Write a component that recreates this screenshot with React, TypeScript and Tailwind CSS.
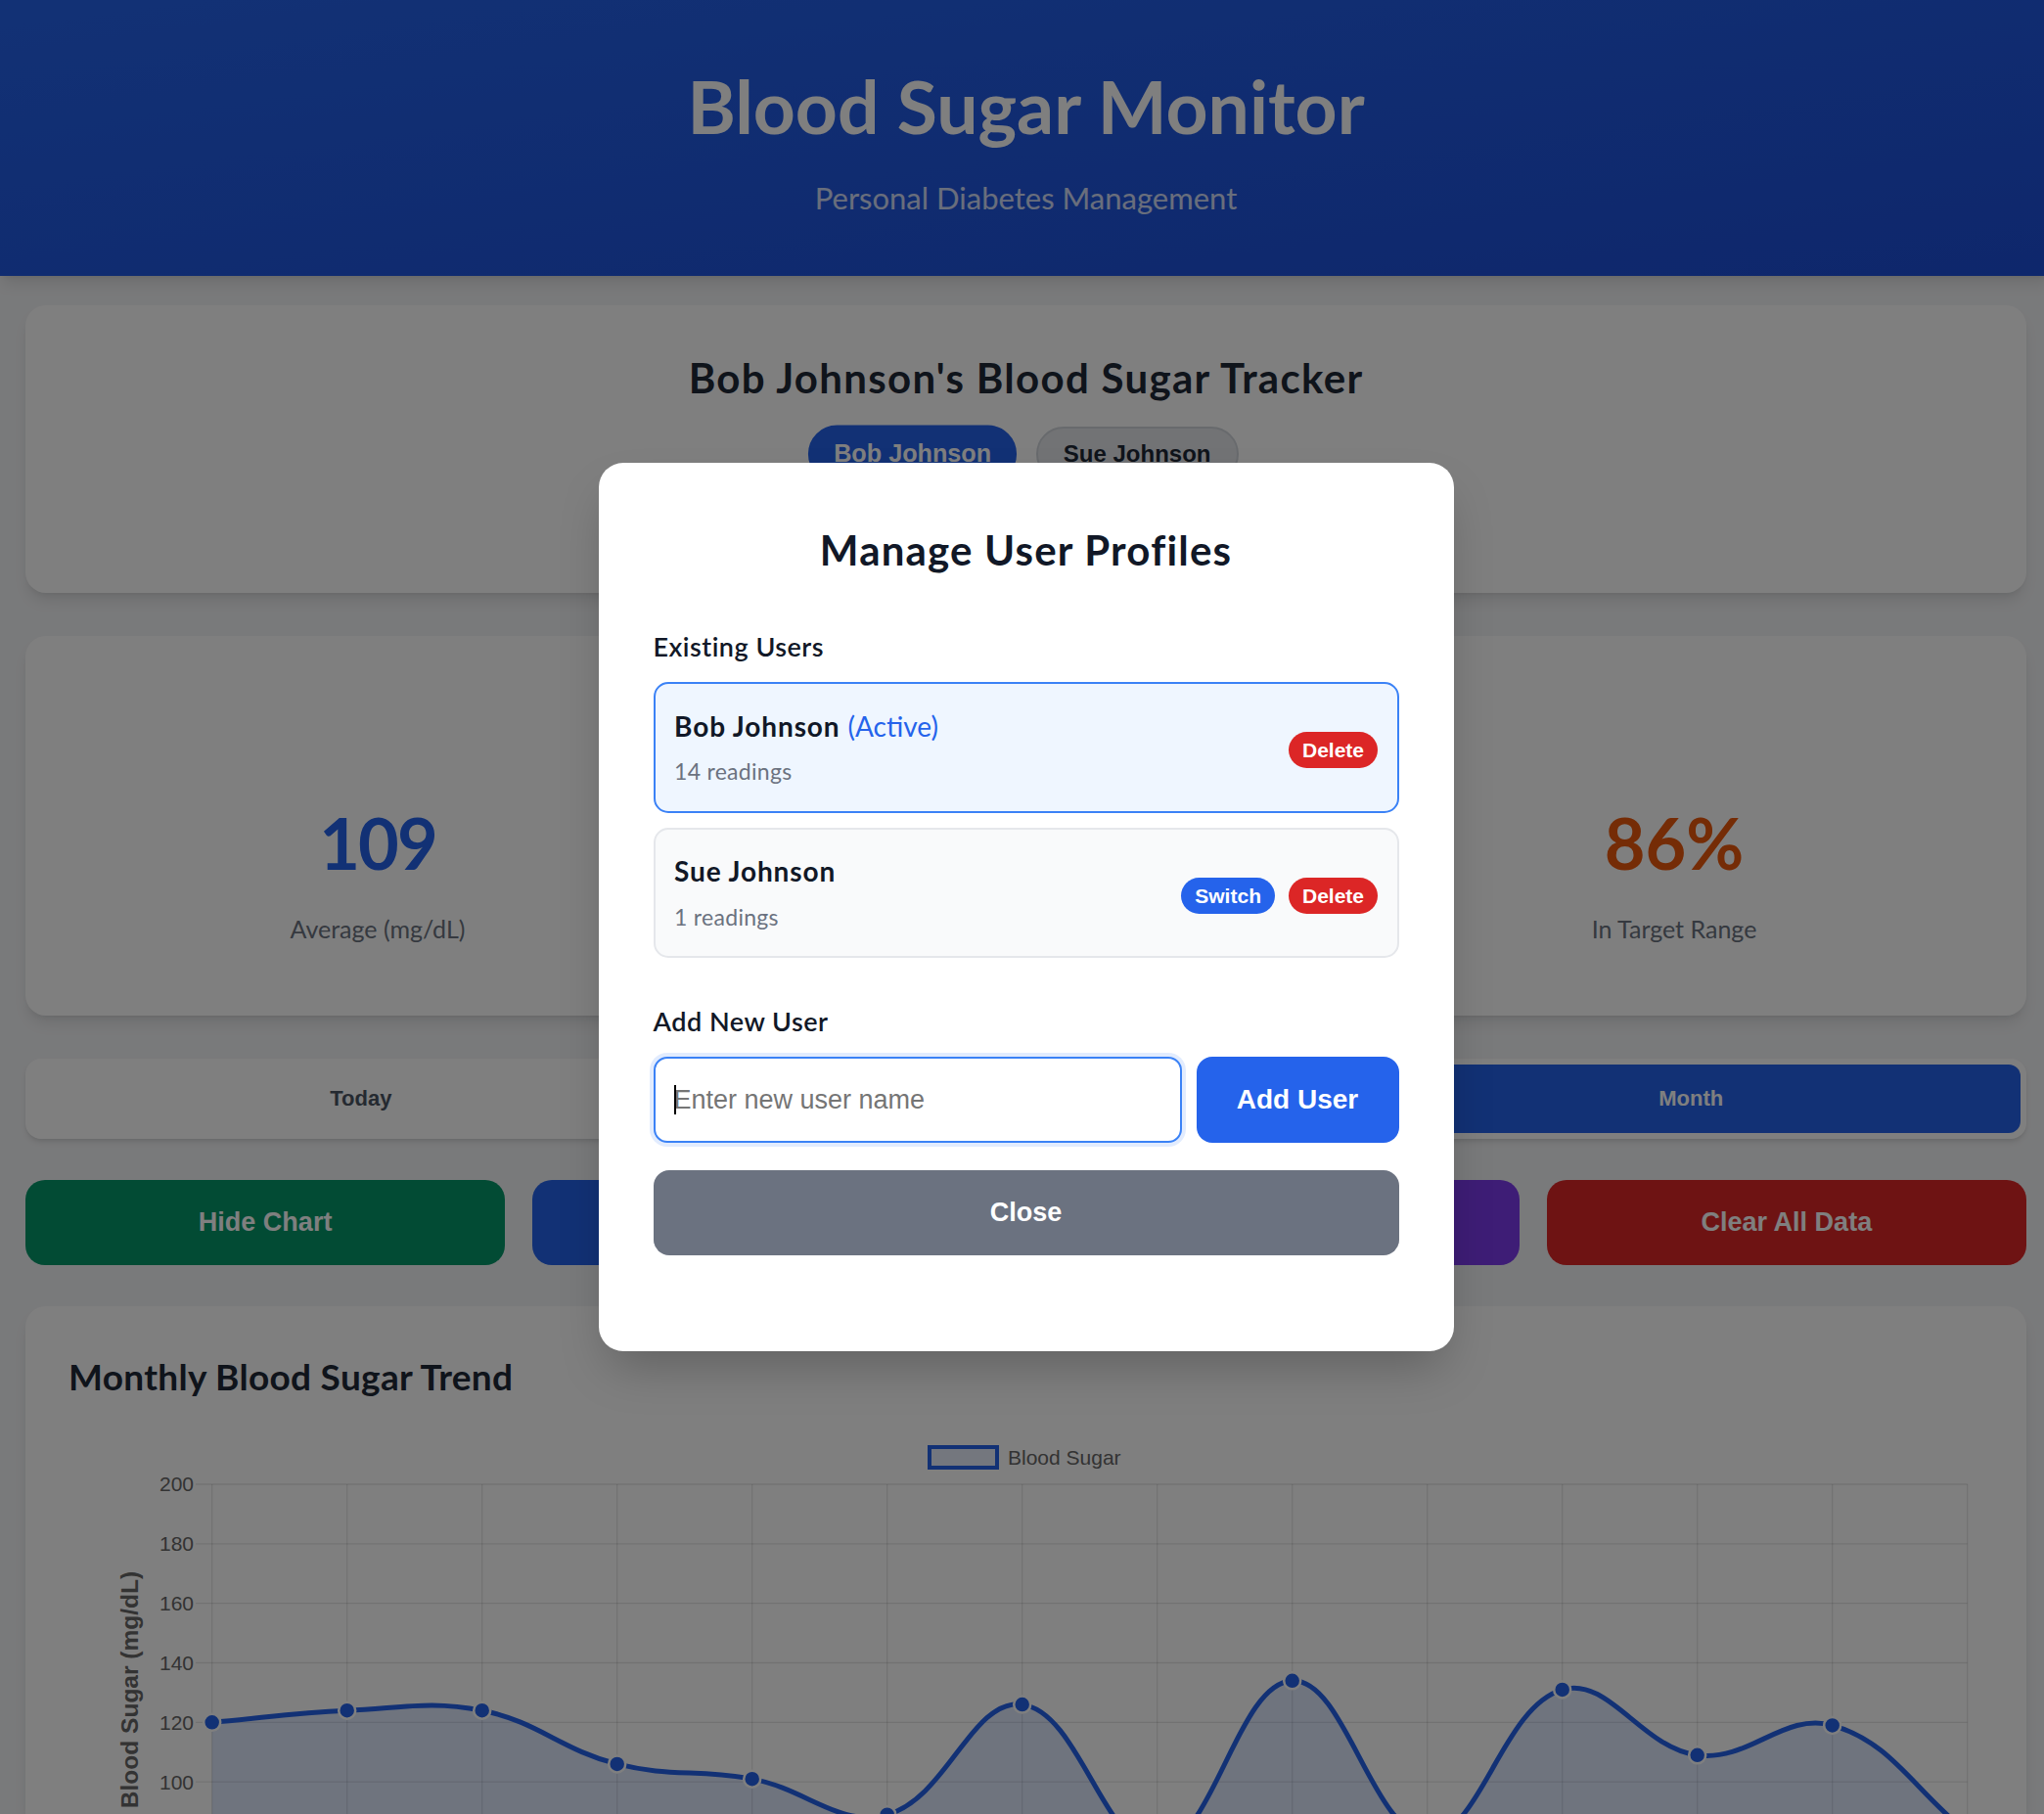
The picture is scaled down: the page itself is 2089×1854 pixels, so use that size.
import React from "react";

const VALUES = [120, 124, 124, 106, 101, 89, 126, 78, 134, 82, 131, 109, 119, 83];
const X0 = 146.7;
const DX = 138;
const Y0 = 62;
const UNIT = 3.042;
const BOTTOM = Y0 + 140 * UNIT;

function buildChart() {
  const pts = VALUES.map((v, i) => ({ x: X0 + DX * i, y: Y0 + (200 - v) * UNIT }));
  const t = 0.4;
  const cps = pts.map((p, i) => {
    const prev = i === 0 ? p : pts[i - 1];
    const next = pts[Math.min(i + 1, pts.length - 1)];
    const d01 = Math.hypot(p.x - prev.x, p.y - prev.y);
    const d12 = Math.hypot(next.x - p.x, next.y - p.y);
    let s01 = d01 / (d01 + d12);
    let s12 = d12 / (d01 + d12);
    if (isNaN(s01)) s01 = 0;
    if (isNaN(s12)) s12 = 0;
    const fa = t * s01;
    const fb = t * s12;
    return {
      px: p.x - fa * (next.x - prev.x),
      py: p.y - fa * (next.y - prev.y),
      nx: p.x + fb * (next.x - prev.x),
      ny: p.y + fb * (next.y - prev.y),
    };
  });
  let d = `M ${pts[0].x} ${pts[0].y}`;
  for (let i = 0; i < pts.length - 1; i++) {
    d += ` C ${cps[i].nx} ${cps[i].ny} ${cps[i + 1].px} ${cps[i + 1].py} ${pts[i + 1].x} ${pts[i + 1].y}`;
  }
  const last = pts[pts.length - 1];
  const fill = `${d} L ${last.x} ${BOTTOM} L ${pts[0].x} ${BOTTOM} Z`;
  return { pts, d, fill };
}

function Chart() {
  const { pts, d, fill } = buildChart();
  const yTicks = [200, 180, 160, 140, 120, 100, 80, 60];
  const grid = "rgba(0,0,0,0.1)";
  const font = "'Liberation Sans', Arial, sans-serif";
  return (
    <svg className="mt-[30px] block" width="1957" height="399" viewBox="0 0 1957 399">
      <rect x="880" y="24" width="69" height="21" fill="rgba(37,99,235,0.1)" stroke="#2563eb" strokeWidth="4" />
      <text x="960" y="42" fontFamily={font} fontSize="21" fill="#666">
        Blood Sugar
      </text>
      {yTicks.map((v, i) => {
        const y = Y0 + i * 20 * UNIT;
        return (
          <g key={v}>
            <line x1="130" x2="1940.7" y1={y} y2={y} stroke={grid} strokeWidth="1.3" />
            <text x="128" y={y + 7.4} textAnchor="end" fontFamily={font} fontSize="21" fill="#666">
              {v}
            </text>
          </g>
        );
      })}
      {VALUES.map((_, i) => {
        const x = X0 + DX * i;
        return <line key={i} x1={x} x2={x} y1={Y0} y2={BOTTOM + 11} stroke={grid} strokeWidth="1.3" />;
      })}
      <text
        transform="translate(71,272) rotate(-90)"
        textAnchor="middle"
        fontFamily={font}
        fontSize="24.5"
        fontWeight="bold"
        fill="#666"
      >
        Blood Sugar (mg/dL)
      </text>
      <path d={fill} fill="rgba(37,99,235,0.15)" />
      <path d={d} fill="none" stroke="#2563eb" strokeWidth="5" />
      {pts.map((p, i) => (
        <circle key={i} cx={p.x} cy={p.y} r="8.5" fill="#2563eb" stroke="#ffffff" strokeWidth="2.5" />
      ))}
    </svg>
  );
}

function StatCard({ value, label, color }: { value: string; label: string; color: string }) {
  return (
    <div className="h-[388px] rounded-[21px] bg-white pt-[175px] text-center shadow-lg">
      <div className={`text-[72px] leading-none font-bold ${color}`}>{value}</div>
      <div className="mt-[40.5px] text-[25px] leading-none text-[#6b7280]">{label}</div>
    </div>
  );
}

function UserRow({ name, count, active }: { name: string; count: number; active: boolean }) {
  return (
    <div
      className={
        active
          ? "flex items-center justify-between rounded-[15px] border-2 border-[#3b82f6] bg-[#eff6ff] px-[19.5px] pt-[28.5px] pb-[28.5px]"
          : "flex items-center justify-between rounded-[15px] border-2 border-[#e5e7eb] bg-[#f9fafb] px-[19.5px] pt-[28.5px] pb-[28.5px]"
      }
    >
      <div>
        <div className="text-[28px] leading-none">
          <span className="font-bold tracking-[0.9px] text-[#111827]">{name}</span>
          {active && <span className="ml-[8px] text-[#2563eb]">(Active)</span>}
        </div>
        <div className="mt-[21.5px] text-[23px] leading-none tracking-[0.3px] text-[#6b7280]">{count} readings</div>
      </div>
      <div className="mt-[6px] flex gap-[14px] [font-family:'Liberation_Sans',Arial,sans-serif]">
        {!active && (
          <button className="h-[37px] rounded-full bg-[#2563eb] px-[14px] text-[21px] font-bold text-white">
            Switch
          </button>
        )}
        <button className="h-[37px] rounded-full bg-[#dc2626] px-[14px] text-[21px] font-bold text-white">
          Delete
        </button>
      </div>
    </div>
  );
}

export default function App() {
  const arial = "[font-family:'Liberation_Sans',Arial,sans-serif]";
  return (
    <div className="h-[1854px] w-full overflow-hidden bg-[#f3f4f6]">
      <div className="relative h-full w-[2097px] bg-[#f3f4f6] [font-family:Lato,'Noto_Sans',sans-serif]">
        <header className="bg-linear-to-br from-[#2563eb] to-[#1d4ed8] pt-[71px] pb-[64px] text-center text-white shadow-lg">
          <h1 className="text-[75px] leading-none font-bold">Blood Sugar Monitor</h1>
          <p className="mt-[40.5px] text-[31px] leading-none text-white/80">Personal Diabetes Management</p>
        </header>

        <main className="px-[26px] pt-[30px]">
          <section className="h-[294px] rounded-[21px] bg-white pt-[53px] text-center shadow-lg">
            <h2 className="text-[42px] leading-none font-bold tracking-[1.3px] text-[#1f2937]">
              Bob Johnson's Blood Sugar Tracker
            </h2>
            <div className={`mt-[29px] flex justify-center gap-[24px] ${arial}`}>
              <button className="h-[56px] scale-105 rounded-full border-2 border-[#2563eb] bg-[#2563eb] px-[23px] text-[24px] font-bold text-white">
                Bob Johnson
              </button>
              <button className="h-[56px] rounded-full border-2 border-[#d1d5db] bg-[#e5e7eb] px-[26px] text-[24px] font-bold text-[#1f2937]">
                Sue Johnson
              </button>
            </div>
          </section>

          <div className="mt-[44px] grid grid-cols-[720px_1fr_720px] gap-[28px]">
            <StatCard value="109" label="Average (mg/dL)" color="text-[#2563eb] tracking-[-2px]" />
            <StatCard value="14" label="Total Readings" color="text-[#16a34a]" />
            <StatCard value="86%" label="In Target Range" color="text-[#ea580c]" />
          </div>

          <div className={`mt-[44px] flex h-[82px] gap-[6px] rounded-[16px] bg-white p-[6px] shadow-md ${arial}`}>
            <button className="flex-1 rounded-[12px] text-[22px] font-bold text-[#4b5563]">Today</button>
            <button className="flex-1 rounded-[12px] text-[22px] font-bold text-[#4b5563]">Week</button>
            <button className="flex-1 rounded-[12px] bg-[#2563eb] text-[22px] font-bold text-white">Month</button>
          </div>

          <div className={`mt-[42px] grid grid-cols-4 gap-[28px] ${arial}`}>
            <button className="h-[87px] rounded-[20px] bg-[#059669] text-[27px] font-bold text-white">Hide Chart</button>
            <button className="h-[87px] rounded-[20px] bg-[#2563eb] text-[27px] font-bold text-white">Export Data</button>
            <button className="h-[87px] rounded-[20px] bg-[#7c3aed] text-[27px] font-bold text-white">Manage Users</button>
            <button className="h-[87px] rounded-[20px] bg-[#dc2626] text-[27px] font-bold text-white">Clear All Data</button>
          </div>

          <section className="mt-[42px] rounded-t-[21px] bg-white px-[44px] pt-[53px] shadow-lg">
            <h3 className="text-[37px] leading-none font-bold tracking-[0.3px] text-[#1f2937]">Monthly Blood Sugar Trend</h3>
            <Chart />
          </section>
        </main>

        <div className="absolute inset-0 flex items-center justify-center bg-black/50">
          <div className="w-[874px] rounded-[25px] bg-white px-[56px] pt-[68px] pb-[98px] shadow-2xl">
            <h2 className="text-center text-[42px] leading-none font-bold tracking-[1.2px] text-[#111827]">
              Manage User Profiles
            </h2>
            <h3 className="mt-[64px] text-[27px] leading-none font-semibold tracking-[0.5px] text-[#111827]">Existing Users</h3>
            <div className="mt-[23px] flex flex-col gap-[15px]">
              <UserRow name="Bob Johnson" count={14} active />
              <UserRow name="Sue Johnson" count={1} active={false} />
            </div>
            <h3 className="mt-[51px] text-[27px] leading-none font-semibold tracking-[0.5px] text-[#111827]">Add New User</h3>
            <div className={`mt-[23px] flex gap-[15px] ${arial}`}>
              <div className="relative w-[540px]">
                <input
                  placeholder="Enter new user name"
                  className="h-[88px] w-full rounded-[14px] border-2 border-[#3b82f6] bg-white px-[19px] text-[27px] text-[#111827] outline-none ring-4 ring-[#3b82f6]/15 placeholder:text-[#757575]"
                />
                <span aria-hidden="true" className="absolute top-[29px] left-[21px] h-[30px] w-[2px] bg-black" />
              </div>
              <button className="h-[88px] flex-1 rounded-[16px] bg-[#2563eb] text-[28px] font-bold text-white">Add User</button>
            </div>
            <button className={`mt-[28px] h-[87px] w-full rounded-[16px] bg-[#6b7280] text-[27px] font-bold text-white ${arial}`}>
              Close
            </button>
          </div>
        </div>
      </div>
    </div>
  );
}
